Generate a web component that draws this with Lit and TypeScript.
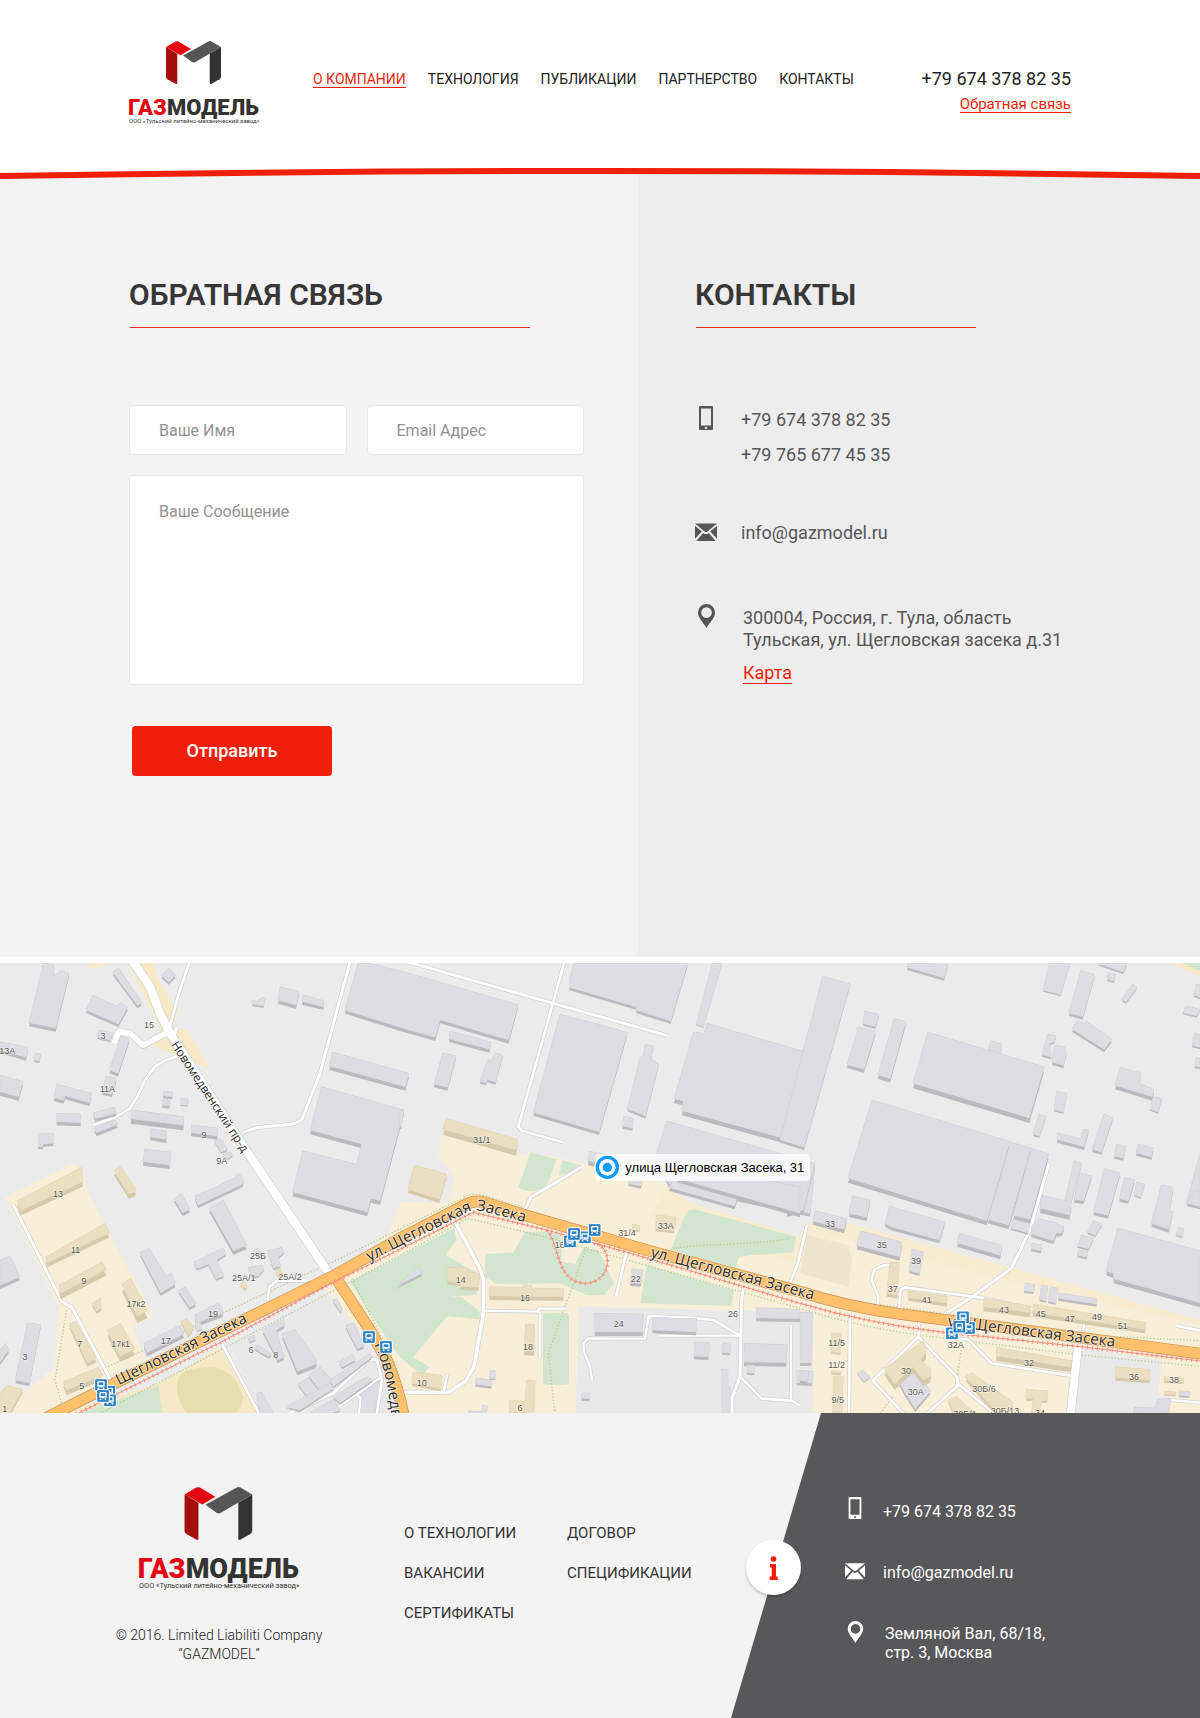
import { LitElement, html, svg, css } from "lit";
import { customElement, property } from "lit/decorators.js";

/* ---------- Map data (map units: 3 per pixel) ---------- */

type Building = [points: string, height: number];
interface Sheet {
  dx: number;
  dy: number;
  grey: Building[];
  beige: Building[];
  labels: [text: string, x: number, y: number][];
}

const SHEETS: Sheet[] = [
  {
    dx: 0,
    dy: 0,
    grey: [
      ["130,39 163,43 158,80 186,62 207,70 167,234 87,218", 11],
      ["338,66 356,54 426,158 412,166", 9],
      ["278,135 347,167 365,158 383,172 355,222 258,180", 9],
      ["296,240 338,248 330,270 292,260", 7],
      ["0,275 84,292 78,322 0,300", 10],
      ["102,330 108,310 122,312 118,333", 6],
      ["0,376 69,394 56,440 0,425", 12],
      ["363,258 388,266 354,370 328,360", 10],
      ["318,378 350,384 336,432 306,425", 9],
      ["170,402 275,430 268,458 196,437 190,450 162,443", 11],
      ["170,490 242,492 242,518 170,515", 11],
      ["280,488 344,472 348,490 286,506", 9],
      ["282,534 345,510 354,522 290,548", 11],
      ["115,550 160,550 160,580 130,582 128,590 114,590", 8],
      ["396,480 552,500 550,526 392,506", 15],
      ["490,423 518,426 517,440 489,437", 8],
      ["488,447 510,450 508,468 487,465", 8],
      ["542,444 565,448 563,466 541,464", 4],
      ["452,537 500,543 499,568 450,560", 11],
      ["574,524 653,534 652,558 573,548", 11],
      ["434,597 512,606 508,645 429,635", 12],
      ["642,572 664,566 683,598 664,606", 5],
      ["668,614 690,604 698,616 682,626", 5],
      ["484,76 508,54 527,76 506,96", 8],
      ["756,150 775,154 781,144 797,142 790,168 757,162", 6],
      ["840,110 897,124 888,166 834,150", 11],
      ["910,134 972,152 970,170 906,154", 10],
      ["1074,39 1105,39 1200,62 1554,164 1526,270 1320,209 1306,262 1200,232 1035,180", 11],
      ["998,306 1227,370 1216,410 988,348", 12],
      ["965,410 1212,480 1140,752 1112,745 1102,786 878,726 908,602 1070,643 1085,582 930,540", 13],
      ["584,738 640,715 704,682 716,668 731,690 728,702 594,766", 9],
    ],
    beige: [["342,662 360,648 408,718 404,726 386,732", 14]],
    labels: [["15", 447, 234], ["3", 309, 267], ["13А", 22, 312], ["11А", 322, 426], ["9", 612, 564], ["9А", 665, 642]],
  },
  {
    dx: 1200,
    dy: 0,
    grey: [
      ["150,243 272,275 268,298 147,266", 10],
      ["128,308 168,318 142,412 102,402", 10],
      ["262,330 275,330 285,308 308,314 286,396 262,388 258,398 240,394", 8],
      ["0,480 11,480 4,530 0,530", 6],
      ["480,192 682,247 597,545 400,487", 10],
      ["522,39 863,39 812,213 708,180 714,152 708,170 508,112 512,90 508,90", 9],
      ["937,39 966,39 910,230 888,222", 4],
      ["736,282 760,288 752,326 776,342 736,498 682,476 720,322 728,322", 8],
      ["672,498 700,505 697,534 667,528", 8],
      ["920,220 1205,302 1280,290 1245,310 1205,580 846,482 850,452 822,446 880,247 912,250", 14],
      ["800,513 1245,640 1230,790 805,700 770,610", 10],
      ["568,604 660,620 650,650 564,632", 14],
      ["686,680 728,690 722,708 685,700", 8],
    ],
    beige: [
      ["137,505 353,568 348,600 130,538", 17],
      ["42,645 140,672 118,748 24,718", 11],
    ],
    labels: [["31/1", 245, 579]],
  },
  {
    dx: 2400,
    dy: 0,
    grey: [
      ["322,39 444,43 432,84 321,52", 8],
      ["68,78 150,102 12,592 -60,570", 8],
      ["194,183 237,193 226,230 189,220", 7],
      ["176,230 227,244 192,358 141,344", 10],
      ["282,206 318,214 270,386 234,374", 12],
      ["572,272 605,282 598,330 560,320", 8],
      ["383,246 732,350 688,504 339,400", 15],
      ["748,39 810,39 782,134 729,120", 5],
      ["842,62 884,72 848,200 807,188", 9],
      ["890,39 982,39 970,66 900,42", 7],
      ["925,68 947,74 942,94 921,88", 5],
      ["998,102 1011,112 978,156 966,148", 6],
      ["832,212 850,220 860,214 936,268 912,298 816,236", 9],
      ["742,252 768,258 762,276 750,280 754,322 726,314", 6],
      ["764,286 793,290 799,308 790,346 756,336", 9],
      ["960,352 1022,368 1018,400 1062,418 1056,440 945,406", 12],
      ["1060,440 1085,444 1074,486 1050,476", 6],
      ["770,424 801,430 790,486 762,478", 6],
      ["716,492 738,498 718,558 699,552", 6],
      ["771,548 842,566 850,538 866,540 852,590 771,568", 10],
      ["912,492 938,504 904,606 876,598", 8],
      ["950,582 977,588 970,624 942,618", 8],
      ["1014,582 1061,594 1054,620 1008,608", 9],
      ["1188,102 1200,104 1200,142 1180,134 1186,120", 6],
      ["1158,168 1200,178 1190,198 1148,188", 5],
      ["1184,250 1200,254 1200,292 1176,286", 6],
      ["1188,322 1200,324 1200,352 1184,348", 6],
      ["216,450 630,574 560,812 144,684", 14],
      ["632,576 692,594 626,826 564,808", 12],
      ["694,595 746,612 690,808 640,796", 12],
      ["822,632 845,640 812,760 795,750", 6],
      ["840,668 875,678 850,752 822,748", 10],
      ["912,656 960,668 924,796 880,786", 10],
      ["974,682 1004,690 985,752 958,746", 9],
      ["1010,696 1034,702 1022,742 1002,734", 5],
      ["1084,704 1120,712 1108,780 1118,786 1106,838 1054,820", 10],
      ["1200,610 1200,770 1160,756", 8],
      ["-1,638 44,640 10,780 -40,790", 10],
    ],
    beige: [],
    labels: [],
  },
  {
    dx: 0,
    dy: 690,
    grey: [
      ["0,240 30,228 60,290 0,316", 11],
      ["522,55 545,42 570,88 548,98", 10],
      ["628,84 670,60 740,196 700,212", 12],
      ["420,218 448,204 498,288 514,278 526,312 482,338", 10],
      ["535,332 556,320 588,372 568,382", 8],
      ["582,246 670,204 678,222 650,240 672,288 648,296 625,252 590,266", 6],
      ["760,210 775,205 782,220 770,226", 4],
      ["802,212 845,202 852,216 835,232 842,258 820,264", 6],
      ["745,262 785,256 792,268 775,288 758,290", 5],
      ["584,405 655,370 668,388 668,400 590,428", 12],
      ["432,490 540,436 552,462 440,518", 12],
      ["584,430 600,425 606,445 592,452", 5],
      ["82,428 122,434 88,608 46,600", 10],
      ["0,510 18,490 26,510 0,546", 10],
      ["788,450 850,418 854,434 828,450 852,530 834,540", 10],
      ["846,462 886,450 950,540 948,552 892,574", 12],
      ["744,472 764,466 766,478 750,486", 5],
      ["762,505 775,495 815,522 806,530", 6],
      ["998,362 1010,355 1026,385 1022,395", 6],
      ["1036,436 1062,428 1092,498 1072,506", 8],
      ["894,612 930,590 965,640 930,660", 6],
      ["926,588 960,560 1000,605 968,640", 6],
      ["1018,545 1058,522 1066,540 1026,562", 6],
      ["770,640 785,636 820,698 780,698", 6],
      ["990,600 1110,520 1116,530 1000,620", 6],
      ["1000,650 1100,590 1118,600 1020,668", 6],
      ["1085,640 1135,600 1125,698 1085,698", 6],
      ["860,680 990,610 1000,625 900,690", 6],
      ["930,698 1000,658 1020,690 1000,698", 6],
    ],
    beige: [
      ["52,62 245,-38 248,5 60,92", 15],
      ["136,232 314,130 329,158 142,248", 14],
      ["176,316 306,246 320,268 182,340", 18],
      ["366,312 392,294 443,392 412,408", 22],
      ["322,450 362,430 405,508 360,528", 18],
      ["208,432 226,424 290,535 262,548", 12],
      ["190,605 295,562 308,585 200,630", 16],
      ["20,617 68,628 30,698 0,698 0,640", 10],
      ["276,370 302,354 304,384 290,394", 8],
      ["543,425 560,415 582,440 566,466", 8],
      ["826,272 838,264 850,283 835,290", 5],
      ["721,312 733,305 742,322 732,328", 5],
    ],
    labels: [["13", 174, 51], ["11", 227, 219], ["9", 251, 312], ["7", 239, 502], ["5", 245, 627], ["3", 75, 540], ["1", 14, 696], ["17к2", 408, 381], ["17к1", 362, 501], ["17", 497, 492], ["19", 639, 411], ["25Б", 774, 237], ["25А/1", 731, 304], ["25А/2", 870, 301], ["6", 753, 519], ["8", 827, 534]],
  },
  {
    dx: 1200,
    dy: 690,
    grey: [
      ["-18,325 55,258 66,280 -10,318", 8],
      ["696,266 728,270 722,310 690,308", 10],
      ["584,400 730,402 728,456 584,456", 12],
      ["757,412 890,416 888,456 757,450", 10],
      ["884,485 928,488 925,530 882,528", 10],
      ["968,490 992,492 990,520 966,518", 6],
      ["1034,490 1162,494 1158,548 1032,546", 12],
      ["1042,555 1064,556 1062,580 1040,578", 6],
      ["1070,383 1200,388 1200,416 1068,414", 10],
      ["964,566 984,568 984,620 992,624 990,698 964,698", 6],
      ["1190,570 1240,574 1236,610 1190,608", 8],
      ["228,593 276,600 274,618 226,612", 8],
      ["270,570 288,572 286,596 268,594", 5],
      ["546,638 571,640 569,656 544,654", 8],
      ["248,675 262,677 260,698 204,698 206,692 246,694", 5],
      ["820,0 1012,52 1004,78 806,22", 10],
      ["1040,-10 1200,20 1200,100 830,-5 860,-40", 12],
    ],
    beige: [
      ["144,262 205,264 205,276 238,280 236,322 182,320 180,308 142,304", 10],
      ["268,320 370,322 372,314 396,316 396,324 492,326 490,350 268,348", 12],
      ["376,432 404,434 402,514 372,512", 14],
      ["38,576 126,586 122,626 36,610", 8],
      ["380,600 406,602 402,698 328,698 328,660 374,664", 8],
      ["770,104 828,112 822,152 766,146", 8],
      ["698,132 720,136 718,152 696,148", 5],
    ],
    labels: [["31/4", 681, 168], ["33А", 797, 147], ["14", 182, 308], ["16", 375, 363], ["16Б", 488, 203], ["18", 384, 510], ["22", 707, 306], ["24", 656, 441], ["26", 999, 411], ["10", 65, 617], ["6", 360, 693]],
  },
  {
    dx: 2400,
    dy: 690,
    grey: [
      ["46,92 140,116 132,148 38,122", 12],
      ["158,47 210,60 200,112 147,100", 11],
      ["268,78 434,126 418,180 278,142 255,130", 10],
      ["182,152 306,186 298,230 170,196", 12],
      ["334,208 370,216 358,280 328,272", 8],
      ["478,160 606,196 600,226 471,188", 12],
      ["638,118 690,132 684,158 632,144", 6],
      ["724,46 814,66 808,105 720,85", 14],
      ["716,116 762,126 792,140 786,158 768,160 760,182 694,162 694,140", 10],
      ["696,190 726,194 722,212 693,206", 8],
      ["880,122 906,132 886,166 862,156", 6],
      ["845,164 880,176 866,206 832,198", 6],
      ["836,210 864,214 860,232 832,226", 6],
      ["1134,140 1152,146 1146,170 1128,164", 5],
      ["954,144 1200,212 1200,368 942,296 940,280 918,272", 14],
      ["676,308 705,314 700,336 672,332", 6],
      ["724,314 744,318 738,362 718,358", 6],
      ["750,320 774,324 766,368 744,364", 6],
      ["776,338 890,356 890,372 774,354", 8],
      ["0,396 38,398 34,548 0,548", 10],
      ["0,572 26,574 22,604 0,602", 8],
      ["172,580 188,570 210,590 192,604", 5],
      ["294,600 340,568 392,632 346,686 316,640", 10],
      ["1140,632 1170,634 1168,648 1136,646", 6],
      ["1072,656 1112,656 1106,698 1000,698 1004,682 1066,684", 6],
      ["1182,30 1200,36 1200,80 1160,70", 8],
    ],
    beige: [
      ["270,246 298,248 292,346 260,340", 10],
      ["326,332 442,348 440,370 324,352", 10],
      ["552,354 692,378 690,398 550,380", 14],
      ["700,372 1038,428 1034,448 698,398", 12],
      ["94,460 124,460 122,518 92,516", 6],
      ["94,572 124,574 122,580 94,578", 6],
      ["100,590 130,590 126,698 98,698", 4],
      ["252,566 370,482 378,502 378,520 360,540 394,570 390,590 370,600 340,560 284,612", 18],
      ["590,502 816,542 812,562 588,528", 15],
      ["496,590 516,578 640,668 622,698 590,698", 12],
      ["444,660 470,650 520,698 460,698", 8],
      ["680,628 744,632 742,660 724,662 722,698 694,698 700,656 678,654", 8],
      ["946,560 1050,568 1048,600 946,592", 10],
      ["1092,590 1152,594 1150,606 1092,602", 6],
      ["1094,634 1128,636 1126,644 1092,642", 5],
    ],
    labels: [["33", 90, 141], ["35", 245, 204], ["39", 348, 252], ["37", 278, 336], ["41", 380, 369], ["43", 612, 399], ["45", 722, 411], ["47", 809, 426], ["49", 891, 420], ["51", 968, 447], ["11/5", 110, 499], ["11/2", 110, 564], ["9/5", 113, 669], ["32А", 467, 504], ["32", 687, 558], ["30", 318, 582], ["30А", 347, 645], ["30Б/6", 552, 636], ["30Б/13", 615, 702], ["30Б/1", 495, 710], ["34", 720, 708], ["36", 1002, 600], ["38", 1122, 609]],
  },
];

type Road = [points: string, width: number];
const ROADS: Road[] = [
  ["396,30 450,110 480,190 510,250 735,596 990,975", 25],
  ["342,280 356,245 390,250 430,286 500,248", 17],
  ["567,39 535,135 510,230", 8],
  ["530,232 522,260", 10],
  ["280,525 350,500 390,475 412,440 435,390 465,350 490,334 540,315", 8],
  ["730,547 770,533 880,522 905,510 960,370 1050,36", 9],
  ["1225,36 1660,160 2002,257", 9],
  ["1693,36 1660,155 1555,530 1565,542 1688,577", 8],
  ["40,765 185,1055 215,1072 334,1294", 9],
  ["665,1180 778,1392", 8],
  ["803,1048 808,1010 830,992 920,992", 8],
  ["1365,815 1440,955 1450,985 1450,1090 1422,1250 1398,1292 1348,1326 1205,1327", 11],
  ["1450,1082 1615,1085 1616,1076 1700,1076", 7],
  ["1620,1085 1620,1226", 7],
  ["1332,1320 1342,1272", 8],
  ["1575,780 1592,742 1680,690 1745,650", 9],
  ["1880,905 1847,1042", 8],
  ["2230,1012 2225,1050 2220,1280 2196,1345 2196,1392", 9],
  ["2220,1280 2285,1346 2375,1352 2400,1366", 8],
  ["2373,1125 2373,1350", 8],
  ["1975,1157 2220,1157", 7],
  ["2090,1105 2140,1110 2220,1157", 8],
  ["1776,1290 1770,1250 1752,1205 1750,1180 1765,1165 1935,1166 1946,1098 2090,1104", 7],
  ["2420,828 2395,935 2370,1000", 8],
  ["3146,642 3090,840 3034,955 2910,1045 2830,1095", 9],
  ["2633,1065 2635,1040 2615,990 2622,960 2650,946 2695,943", 8],
  ["2697,1075 2702,1020 2715,1012 2950,1044", 8],
  ["2950,1044 3240,1108 3252,1116 3248,1175", 7],
  ["2550,1090 2547,1392", 8],
  ["2758,1115 2755,1160 2618,1292 2712,1392", 8],
  ["2755,1160 2872,1282 2872,1308 2780,1392", 8],
  ["2872,1300 2985,1392", 8],
  ["2850,1165 2905,1168 2975,1240 3212,1277", 8],
  ["3234,1190 3212,1392", 24],
  ["3528,1127 3600,1142", 8],
  ["3510,1350 3600,1358", 7],
  ["862,1392 1000,1330 1108,1228 1130,1228 1146,1290 1130,1392", 8],
  ["985,1392 1140,1284", 7],
  ["1068,1330 1082,1345 1076,1392", 7],
];

const ROAD_MAIN =
  "M130,1408 L340,1302 L1000,978 L1200,865 L1395,765 Q1420,750 1450,756 L1580,797 L1940,900 L2400,1025 Q2540,1070 2700,1092 L2900,1118 L3610,1212";
const ROAD_SOUTH = "M1005,980 L1110,1140 L1160,1230 Q1195,1310 1212,1400";
const TRAM =
  "M230,1392 L660,1178 L1000,997 L1200,898 L1420,787 L1640,840 L1900,912 L2400,1060 Q2600,1120 2840,1148 L3260,1192 L3610,1234";
const TRAM_LOOP = "M1640,840 C1680,880 1665,1000 1760,1000 C1830,995 1845,900 1785,878";

const DOTTED = [
  "M270,1275 L1000,935 L1400,738 Q1420,728 1450,736 L1570,772",
  "M290,1395 L1005,1020 L1405,805 L1640,862 L2400,1075 Q2600,1140 2840,1165 L3240,1215 L3610,1250",
  "M2020,895 C2120,880 2280,885 2370,865",
  "M200,1080 L165,1290 L185,1360",
  "M1760,890 L1690,1085 L1645,1210 L1665,1392",
  "M2885,1190 L2872,1280",
  "M2640,1390 L2680,1340",
  "M3260,1156 L3600,1172",
  "M2640,1064 L2900,1100",
  "M1055,985 L1190,1250 L1216,1390",
];

const BUS_STOPS: [number, number][] = [
  [328, 1325], [330, 1351], [303, 1305], [309, 1338],
  [1107, 1161], [1158, 1191],
  [1710, 874], [1755, 862], [1722, 852], [1784, 840],
  [2856, 1150], [2907, 1134], [2889, 1102], [2878, 1130],
];

/** Quads dropped from every roof edge make up the visible walls. */
const wallPath = (points: string, h: number): string => {
  const p = points.split(" ").map((s) => s.split(",").map(Number));
  return p
    .map(([x1, y1], i) => {
      const [x2, y2] = p[(i + 1) % p.length];
      return `M${x1},${y1}L${x2},${y2}L${x2},${y2 + h}L${x1},${y1 + h}Z`;
    })
    .join("");
};

@customElement("city-map")
export class CityMap extends LitElement {
  static styles = css`
    :host {
      display: block;
    }
    svg {
      display: block;
      width: 100%;
      height: 450px;
      background: #ebebeb;
    }
    .lived {
      fill: #f8efd8;
    }
    .sand {
      fill: #f5e9c6;
    }
    .field {
      fill: #e6ddb0;
    }
    .meadow {
      fill: #ede6cc;
    }
    .park {
      fill: #d2e5cf;
    }
    .yard {
      fill: #e9e9ea;
    }
    .wall {
      fill: #bababf;
    }
    .roof {
      fill: #dddde3;
      stroke: #d0d0d6;
      stroke-width: 1;
    }
    .beige .wall {
      fill: #d5caab;
    }
    .beige .roof {
      fill: #eadfc1;
      stroke: #ddd2b2;
    }
    .line {
      fill: none;
      stroke-linejoin: round;
    }
    .edge {
      stroke: #cfcfcf;
    }
    .street {
      stroke: #ffffff;
    }
    .main-edge {
      stroke: #c89058;
      stroke-width: 35;
    }
    .main {
      stroke: #ffc06c;
      stroke-width: 31;
    }
    .tram {
      stroke: #f98a7c;
      stroke-width: 3;
    }
    .ties {
      stroke: #f98a7c;
      stroke-width: 11;
      stroke-dasharray: 3 12;
    }
    .path {
      stroke: #b5cc96;
      stroke-width: 4;
      stroke-dasharray: 4 6;
    }
    .house {
      font: 27px "Liberation Sans", sans-serif;
      fill: #5c5a50;
      text-anchor: middle;
      paint-order: stroke;
      stroke: rgba(255, 255, 255, 0.5);
      stroke-width: 4px;
    }
    .street-name {
      font: 46px "Open Sans", "Noto Sans", sans-serif;
      fill: #2d2d2d;
      paint-order: stroke;
      stroke: rgba(255, 255, 255, 0.65);
      stroke-width: 5px;
    }
    .small {
      font-size: 36px;
    }
    .bus {
      fill: #2c82c2;
      stroke: #ffffff;
      stroke-width: 3;
    }
    .glyph {
      fill: #ffffff;
    }
    .glyph-window {
      fill: #2c82c2;
    }
    .tag {
      fill: rgba(255, 255, 255, 0.8);
    }
    .tag-text {
      font: 39px "Liberation Sans", Arial, sans-serif;
      fill: #000000;
    }
    .pin-halo {
      fill: #ffffff;
    }
    .pin {
      fill: #0f9bff;
    }
  `;

  private buildings(list: Building[]) {
    return list.map(
      ([points, h]) => svg`<path class="wall" d=${wallPath(points, h)} /><polygon class="roof" points=${points} />`
    );
  }

  private bus([x, y]: [number, number]) {
    return svg`<g transform="translate(${x} ${y})">
      <rect class="bus" x="-19" y="-19" width="38" height="38" rx="4" />
      <rect class="glyph" x="-11" y="-12" width="22" height="19" rx="4" />
      <rect class="glyph-window" x="-7" y="-8" width="14" height="8" />
      <circle class="glyph-window" cx="-6" cy="4" r="1.5" /><circle class="glyph-window" cx="6" cy="4" r="1.5" />
      <rect class="glyph" x="-10" y="8" width="5" height="4" /><rect class="glyph" x="5" y="8" width="5" height="4" />
    </g>`;
  }

  render() {
    return html`<svg viewBox="0 39 3600 1350" preserveAspectRatio="xMidYMid slice" role="img" aria-label="Карта">
      <polygon class="sand" points="258,39 332,39 275,58" />
      <polygon class="sand" points="383,39 465,39 468,75 535,190 515,235 560,240 632,358 560,332 455,285 480,235 452,175" />
      <polygon class="sand" points="3510,39 3600,39 3600,80" />
      <polygon class="park" points="3545,39 3600,39 3600,62" />
      <polygon class="lived" points="15,742 215,640 240,655 262,720 330,855 462,1098 398,1132 436,1228 350,1300 140,1389 0,1389 0,1325 30,1345 75,1330 162,1250 176,1070" />
      <polygon class="lived" points="1166,850 1200,758 1342,758 1364,690 1350,660 1316,620 1322,555 1560,612 1590,606 1900,672 2010,705 2060,755 2400,860 2416,820 2545,820 3040,955 3600,1110 3600,1389 1200,1389 1180,1250 1060,1120 975,1020" />
      <polygon class="sand" points="2010,705 2060,755 2400,860 2416,820 2545,820 3040,955 3600,1110 3600,1125 3000,985 2500,860 2380,935 1950,800" opacity="0.5" />
      <polygon class="sand" points="478,1300 660,1190 775,1389 180,1389" />
      <path class="field" d="M730,1345 Q720,1389 700,1389 H560 Q520,1340 536,1285 Q550,1250 640,1252 Q705,1262 730,1345Z" />
      <polygon class="park" points="240,1389 475,1307 488,1389" />
      <polygon class="yard" points="690,1180 975,1030 1060,1170 1130,1215 1200,1389 775,1389" />
      <polygon class="park" points="1050,995 1200,918 1362,835 1370,870 1336,915 1440,975 1430,1035 1350,1040 1385,1042 1440,1085 1438,1108 1342,1098 1238,1222 1288,1250 1268,1278 1200,1222 1150,1150" />
      <path class="park" d="M1575,845 L1640,845 L1682,855 L1685,935 L1725,942 L1750,895 L1795,900 L1842,1000 L1812,1036 L1760,1036 L1722,1018 L1680,1000 L1490,1002 L1455,980 L1456,912 L1540,908Z" />
      <path class="park" d="M2060,785 Q2075,776 2100,782 L2388,860 L2380,908 L2258,915 L2218,920 L2206,955 L2012,900 L2040,830Z" />
      <polygon class="park" points="1940,945 2202,1022 2194,1068 1922,1060" />
      <rect class="park" x="1629" y="1090" width="78" height="214" rx="10" />
      <path class="park" d="M1592,607 L1670,628 L1640,708 Q1600,738 1555,712Z" />
      <polygon class="park" points="1688,630 1742,646 1720,665 1676,675" />
      <polygon class="meadow" points="2420,855 2545,885 2556,930 2545,1010 2400,970" />
      <polygon class="yard" points="1738,1070 2400,1085 2440,1085 2438,1389 1726,1389" />
      <polygon class="yard" points="3245,1190 3486,1232 3474,1330 3512,1345 3505,1389 3220,1389" />

      ${DOTTED.map((d) => svg`<path class="line path" d=${d} />`)}
      ${ROADS.map(([p, w]) => svg`<polyline class="line edge" points=${p} stroke-width=${w + 4} />`)}
      ${ROADS.map(([p, w]) => svg`<polyline class="line street" points=${p} stroke-width=${w} />`)}
      ${SHEETS.map(
        (s) => svg`<g transform="translate(${s.dx} ${s.dy})">
          <g>${this.buildings(s.grey)}</g>
          <g class="beige">${this.buildings(s.beige)}</g>
        </g>`
      )}
      <path class="line main-edge" d=${ROAD_SOUTH} />
      <path class="line main-edge" d=${ROAD_MAIN} />
      <path class="line main" d=${ROAD_SOUTH} />
      <path class="line main" d=${ROAD_MAIN} />
      ${[TRAM, TRAM_LOOP].map((d) => svg`<path class="line tram" d=${d} /><path class="line ties" d=${d} />`)}
      ${SHEETS.map((s) => s.labels.map(([t, x, y]) => svg`<text class="house" x=${s.dx + x} y=${s.dy + y}>${t}</text>`))}

      <defs>
        <path id="n1" d="M290,1338 L1000,990" />
        <path id="n2" d="M1108,934 L1400,788 Q1420,778 1450,784 L1700,850" />
        <path id="n3" d="M1950,920 L2500,1065" />
        <path id="n4" d="M2842,1128 L3500,1210" />
        <path id="n5" d="M512,284 L800,720" />
        <path id="n6" d="M1122,1184 Q1170,1270 1182,1500" />
      </defs>
      <text class="street-name"><textPath href="#n1">ул. Щегловская Засека</textPath></text>
      <text class="street-name"><textPath href="#n2">ул. Щегловская Засека</textPath></text>
      <text class="street-name"><textPath href="#n3">ул. Щегловская Засека</textPath></text>
      <text class="street-name"><textPath href="#n4">ул. Щегловская Засека</textPath></text>
      <text class="street-name small"><textPath href="#n5">Новомедвенский пр-д</textPath></text>
      <text class="street-name"><textPath href="#n6">Новомедвенский</textPath></text>
      ${BUS_STOPS.map((b) => this.bus(b))}

      <rect class="tag" x="1786" y="612" width="644" height="81" rx="12" />
      <circle class="pin-halo" cx="1822" cy="652" r="39" />
      <circle class="pin" cx="1822" cy="652" r="35" />
      <circle class="pin-halo" cx="1822" cy="652" r="25" />
      <circle class="pin" cx="1822" cy="652" r="14" />
      <text class="tag-text" x="1876" y="666">улица Щегловская Засека, 31</text>
    </svg>`;
  }
}

@customElement("brand-logo")
export class BrandLogo extends LitElement {
  static styles = css`
    :host {
      display: block;
    }
    svg {
      display: block;
      width: 100%;
      overflow: visible;
    }
    .name {
      font: 900 22px Roboto, sans-serif;
    }
    .sub {
      font: 6px Roboto, sans-serif;
      fill: #333333;
    }
    .red {
      fill: #e30613;
    }
    .wine {
      fill: #a50f0a;
    }
    .grey {
      fill: #565656;
    }
    .dark {
      fill: #333332;
    }
  `;

  render() {
    return html`<svg viewBox="0 0 130 84" role="img" aria-label="Газмодель">
      <path class="red" d="M37 6 L46.500 0.500 Q48 -0.200 49.500 0.500 L62 8 L51.500 14.200 Z" />
      <path class="wine" d="M37 6 L48.300 12.700 V42 Q48.300 43.500 46.500 42.700 L38.500 38.200 Q37 37.200 37 35.800 Z" />
      <path class="grey" d="M54 14.500 L79.500 0.400 Q81 -0.300 82.500 0.500 L92 6 L66.500 21 Q64.700 22 63 21 Z" />
      <path class="dark" d="M92 6 V35.800 Q92 37.200 90.500 38.200 L82.500 42.700 Q80.700 43.500 80.700 42 V12.700 Z" />
      <text class="name" x="-1" y="74"><tspan class="red">ГАЗ</tspan><tspan class="dark">МОДЕЛЬ</tspan></text>
      <text class="sub" x="0" y="82">ООО «Тульский литейно-механический завод»</text>
    </svg>`;
  }
}

@customElement("contact-icon")
export class ContactIcon extends LitElement {
  @property() name: "phone" | "mail" | "pin" = "phone";

  static styles = css`
    :host {
      display: block;
    }
    svg {
      display: block;
      width: 100%;
      height: 100%;
      fill: currentColor;
    }
  `;

  render() {
    const shapes = {
      phone: svg`<path fill-rule="evenodd" d="M5 0 h12 a1 1 0 0 1 1 1 v22 a1 1 0 0 1 -1 1 h-12 a1 1 0 0 1 -1 -1 v-22 a1 1 0 0 1 1 -1Z M6 2.500 v17 h10 v-17Z M11 20.700 a1.200 1.200 0 1 0 0.010 0Z" />`,
      mail: svg`<path d="M0 3.500 H22 L12.500 11.500 Q11 12.700 9.500 11.500Z" /><path d="M0 5.800 L6.800 11.600 L0 18.800Z M22 5.800 L15.200 11.600 L22 18.800Z" /><path d="M1.300 21 L8.200 12.900 Q11 15.300 13.800 12.900 L20.700 21Z" />`,
      pin: svg`<path fill-rule="evenodd" d="M11.500 0 A8.500 8.500 0 0 1 20 8.500 C20 14 15 18 11.500 24 C8 18 3 14 3 8.500 A8.500 8.500 0 0 1 11.500 0Z M11.500 3.300 a5.300 5.300 0 1 0 0.010 0Z" />`,
    };
    return html`<svg viewBox="0 0 22 24" aria-hidden="true">${shapes[this.name]}</svg>`;
  }
}

@customElement("app-root")
export class AppRoot extends LitElement {
  static styles = css`
    :host {
      display: block;
      background: #ffffff;
      font-family: Roboto, "Noto Sans", sans-serif;
      color: #222222;
    }
    * {
      box-sizing: border-box;
    }
    a {
      color: inherit;
      text-decoration: none;
    }
    .accent {
      color: #f01f0a;
      border-bottom: 1px solid currentColor;
    }

    .header {
      position: relative;
      height: 166px;
    }
    .header-inner {
      display: flex;
      align-items: flex-start;
      max-width: 942px;
      margin: 0 auto;
    }
    .header-logo {
      width: 130px;
      margin-top: 41px;
    }
    .nav {
      display: flex;
      gap: 22px;
      margin: 71px 0 0 54px;
      font-size: 14px;
      line-height: 16px;
    }
    .call {
      display: flex;
      flex-direction: column;
      align-items: flex-end;
      gap: 6px;
      margin: 68px 0 0 auto;
      font-size: 18px;
      line-height: 22px;
    }
    .call .accent {
      font-size: 15px;
      line-height: 16px;
    }
    .curve {
      position: absolute;
      left: 0;
      top: 100%;
      display: block;
      width: 100%;
      height: 14px;
    }

    .hero {
      display: grid;
      grid-template-columns: 638fr 562fr;
      min-height: 797px;
      border-bottom: 6px solid #ffffff;
    }
    .feedback {
      background: #f3f3f3;
      padding: 109px 54px 0 129px;
    }
    .contacts {
      background: #ededed;
      padding: 109px 54px 0 57px;
    }
    h2 {
      margin: 0;
      font-size: 30px;
      line-height: 40px;
      font-weight: 600;
      color: #373737;
    }
    .rule {
      width: 400px;
      height: 1px;
      margin: 12px 0 77px 1px;
      background: #e5301c;
    }
    .rule.short {
      width: 280px;
    }
    .fields {
      display: grid;
      grid-template-columns: 1fr 1fr;
      gap: 20px;
    }
    input,
    textarea {
      display: block;
      width: 100%;
      margin: 0;
      border: 1px solid #e8e8e8;
      border-radius: 4px;
      background: #ffffff;
      font: 16px/20px Roboto, "Noto Sans", sans-serif;
      color: #444444;
      outline: none;
    }
    input {
      height: 50px;
      padding: 0 29px;
    }
    textarea {
      grid-column: 1 / 3;
      height: 210px;
      padding: 26px 29px;
      resize: none;
    }
    ::placeholder {
      color: #929292;
      opacity: 1;
    }
    .send {
      width: 200px;
      height: 50px;
      margin: 41px 0 0 3px;
      border: 0;
      border-radius: 4px;
      background: #f01f0a;
      color: #ffffff;
      font: 500 18px/20px Roboto, "Noto Sans", sans-serif;
    }
    .list {
      display: grid;
      grid-template-columns: 22px 1fr;
      column-gap: 24px;
      font-size: 18px;
      line-height: 22px;
      color: #565656;
    }
    .contacts .list {
      padding-top: 1px;
    }
    .list contact-icon {
      width: 22px;
      height: 24px;
    }
    .list .lines {
      display: flex;
      flex-direction: column;
      align-items: flex-start;
      font-style: normal;
    }
    .phones {
      gap: 13px;
      margin: 3px 0 54px;
    }
    .mail {
      margin: 2px 0 60px;
    }
    .address {
      gap: 12px;
      margin: 3px 0 0 2px;
    }
    .address .accent {
      line-height: 20px;
    }

    .footer {
      position: relative;
      display: grid;
      grid-template-columns: 731fr 469fr;
      min-height: 305px;
      background: #f3f3f3;
    }
    .dark {
      position: absolute;
      inset: 0 0 0 731px;
      background: #58585a;
      clip-path: polygon(90px 0, 100% 0, 100% 100%, 0 100%);
    }
    .about {
      display: flex;
      align-items: flex-start;
      padding: 74px 0 0 109px;
    }
    .company {
      width: 220px;
      font-size: 14px;
      line-height: 19px;
      font-weight: 300;
      text-align: center;
    }
    .company brand-logo {
      width: 160px;
      margin: 0 auto;
    }
    .company p {
      margin: 36px 0 0;
    }
    .links {
      display: grid;
      grid-template-columns: 163px auto;
      grid-auto-rows: 40px;
      margin: 36px 0 0 75px;
      font-size: 15px;
      line-height: 20px;
      color: #333333;
    }
    .badge {
      position: absolute;
      left: 746px;
      top: 127px;
      width: 55px;
      height: 55px;
      border-radius: 50%;
      background: #ffffff;
      box-shadow: 0 2px 3px rgba(0, 0, 0, 0.2);
    }
    .badge svg {
      display: block;
      width: 100%;
      fill: #f01f0a;
    }
    .reach {
      position: relative;
      align-content: start;
      grid-template-columns: 20px 1fr;
      column-gap: 18px;
      padding: 84px 24px 0 114px;
      font-size: 16px;
      line-height: 19px;
      color: #ffffff;
    }
    .reach contact-icon {
      width: 20px;
      height: 22px;
    }
    .reach .phones {
      margin: 5px 0 39px;
    }
    .reach .mail {
      margin: 3px 0 39px;
    }
    .reach .address {
      margin: 3px 0 0 2px;
    }
  `;

  private nav = ["О КОМПАНИИ", "ТЕХНОЛОГИЯ", "ПУБЛИКАЦИИ", "ПАРТНЕРСТВО", "КОНТАКТЫ"];
  private footerLinks = ["О ТЕХНОЛОГИИ", "ДОГОВОР", "ВАКАНСИИ", "СПЕЦИФИКАЦИИ", "СЕРТИФИКАТЫ"];

  render() {
    return html`
      <header class="header">
        <div class="header-inner">
          <brand-logo class="header-logo"></brand-logo>
          <nav class="nav">
            ${this.nav.map((t, i) => html`<a href="#" class=${i === 0 ? "accent" : ""}>${t}</a>`)}
          </nav>
          <div class="call">
            <a href="tel:+79674378​8235">+79 674 378 82 35</a>
            <a class="accent" href="#feedback">Обратная связь</a>
          </div>
        </div>
        <svg class="curve" viewBox="0 0 1200 14" preserveAspectRatio="none" aria-hidden="true">
          <path d="M0 0 H1200 V9 Q600 1 0 9Z" fill="#ffffff" />
          <path d="M0 10 Q600 0 1200 10" fill="none" stroke="#f01f0a" stroke-width="6" />
        </svg>
      </header>

      <main>
        <div class="hero">
          <section class="feedback" id="feedback">
            <h2>ОБРАТНАЯ СВЯЗЬ</h2>
            <div class="rule"></div>
            <form @submit=${(e: Event) => e.preventDefault()}>
              <div class="fields">
                <input type="text" aria-label="Ваше Имя" placeholder="Ваше Имя" />
                <input type="email" aria-label="Email Адрес" placeholder="Email Адрес" />
                <textarea aria-label="Ваше Сообщение" placeholder="Ваше Сообщение"></textarea>
              </div>
              <button class="send" type="submit">Отправить</button>
            </form>
          </section>
          <section class="contacts">
            <h2>КОНТАКТЫ</h2>
            <div class="rule short"></div>
            <div class="list">
              <contact-icon name="phone"></contact-icon>
              <div class="lines phones">
                <a href="tel:+79674378 8235">+79 674 378 82 35</a>
                <a href="tel:+79765677 4535">+79 765 677 45 35</a>
              </div>
              <contact-icon name="mail"></contact-icon>
              <div class="lines mail"><a href="mailto:info@gazmodel.ru">info@gazmodel.ru</a></div>
              <contact-icon name="pin"></contact-icon>
              <address class="lines address">
                <span>300004, Россия, г. Тула, область<br />Тульская, ул. Щегловская засека д.31</span>
                <a class="accent" href="#map">Карта</a>
              </address>
            </div>
          </section>
        </div>
        <city-map id="map"></city-map>
      </main>

      <footer class="footer">
        <div class="dark"></div>
        <div class="about">
          <div class="company">
            <brand-logo></brand-logo>
            <p>© 2016. Limited Liabiliti Company<br />“GAZMODEL”</p>
          </div>
          <nav class="links">${this.footerLinks.map((t) => html`<span><a href="#">${t}</a></span>`)}</nav>
        </div>
        <div class="list reach">
          <contact-icon name="phone"></contact-icon>
          <div class="lines phones"><a href="tel:+79674378 8235">+79 674 378 82 35</a></div>
          <contact-icon name="mail"></contact-icon>
          <div class="lines mail"><a href="mailto:info@gazmodel.ru">info@gazmodel.ru</a></div>
          <contact-icon name="pin"></contact-icon>
          <address class="lines address"><span>Земляной Вал, 68/18,<br />стр. 3, Москва</span></address>
        </div>
        <div class="badge">
          <svg viewBox="0 0 55 55" aria-hidden="true">
            <circle cx="27.500" cy="19" r="2.800" />
            <path d="M24 24 h6 v12.500 h1.700 v3.500 h-8 v-3.500 h2 v-9 h-1.700Z" />
          </svg>
        </div>
      </footer>
    `;
  }
}
